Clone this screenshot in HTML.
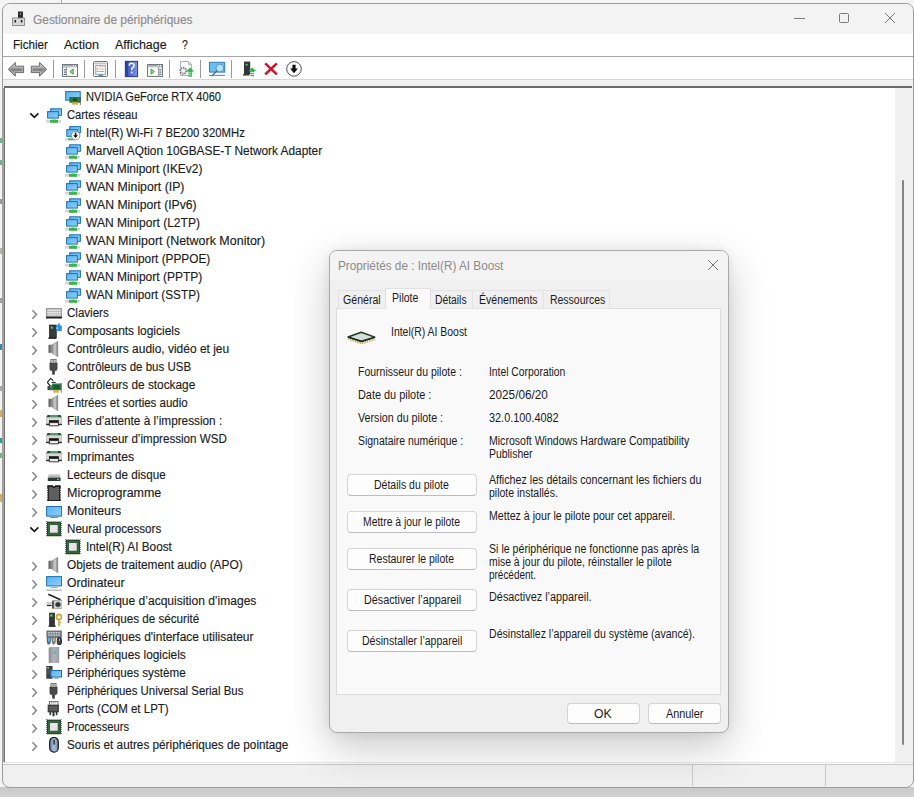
<!DOCTYPE html>
<html><head><meta charset="utf-8">
<style>
*{margin:0;padding:0;box-sizing:border-box}
html,body{width:914px;height:797px;overflow:hidden;background:#f4f4f4;font-family:"Liberation Sans",sans-serif;position:relative}
.a{position:absolute;display:block}
.t{position:absolute;white-space:pre;line-height:18px;height:18px;transform-origin:0 0;font-family:"Liberation Sans",sans-serif}
.btn{position:absolute;background:#fdfdfd;border:1px solid #d4d4d4;border-bottom-color:#bdbdbd;border-radius:4px}
</style></head><body>
<!-- background outside window -->
<div class="a" style="left:0;top:787px;width:914px;height:10px;background:linear-gradient(#c9c9c9,#d2d2d2)"></div>
<div class="a" style="left:0;top:138px;width:2px;height:5px;background:#3a9a5a;opacity:.7"></div>
<div class="a" style="left:0;top:160px;width:2px;height:5px;background:#3a9a5a;opacity:.7"></div>
<div class="a" style="left:0;top:199px;width:2px;height:5px;background:#9a9a9a"></div>
<div class="a" style="left:0;top:248px;width:2px;height:6px;background:#b8b8a0"></div>
<div class="a" style="left:0;top:298px;width:2px;height:5px;background:#a0a0a0"></div>
<div class="a" style="left:0;top:344px;width:2px;height:6px;background:#3a8aa0"></div>
<div class="a" style="left:0;top:386px;width:2px;height:5px;background:#a8a8a8"></div>
<div class="a" style="left:0;top:410px;width:2px;height:7px;background:#d0b060"></div>
<div class="a" style="left:0;top:438px;width:2px;height:5px;background:#3a9a8a"></div>
<div class="a" style="left:0;top:453px;width:2px;height:5px;background:#3a9a5a;opacity:.7"></div>
<div class="a" style="left:0;top:494px;width:2px;height:8px;background:#d0b060"></div>
<div class="a" style="left:61px;top:0;width:1px;height:3px;background:#b0b0b0"></div>
<!-- window -->
<div class="a" style="left:2px;top:3px;width:912px;height:785px;border:1px solid #9c9c9c;border-radius:8px;background:#f0f0f0;overflow:hidden">
  <div class="a" style="left:0;top:0;width:100%;height:30px;background:#f3f3f3"></div>
  <div class="a" style="left:0;top:30px;width:100%;height:23px;background:#fff;border-bottom:1px solid #a6a6a6"></div>
  <div class="a" style="left:0;top:53px;width:100%;height:23px;background:#fff;border-bottom:1px solid #d6d6d6"></div>
  <div class="a" style="left:0;top:76px;width:100%;height:7px;background:#f0f0f0"></div>
</div>
<!-- title bar icon + caption buttons -->
<svg class="a" style="left:11px;top:10px" width="16" height="18" viewBox="0 0 16 18">
  <rect x="7" y="1.5" width="5" height="7" fill="#2e2e2e"/><rect x="9" y="3.5" width="1" height="1" fill="#ddd"/>
  <rect x="1.5" y="8" width="12" height="7.5" fill="#d8d8d8" stroke="#7a7a7a" stroke-width="0.8"/>
  <rect x="3.5" y="10" width="1.6" height="2.5" fill="#222"/><rect x="9.8" y="10" width="1.6" height="2.5" fill="#222"/>
</svg>
<div class="a" style="left:794px;top:18px;width:11px;height:1px;background:#7a7a7a"></div>
<div class="a" style="left:839px;top:13px;width:10px;height:10px;border:1px solid #7a7a7a;border-radius:1.5px"></div>
<svg class="a" style="left:884px;top:12px" width="12" height="12" viewBox="0 0 12 12"><path d="M1 1L11 11M11 1L1 11" stroke="#7a7a7a" stroke-width="1"/></svg>
<svg width="0" height="0" style="position:absolute"><defs>
<linearGradient id="gmon" x1="0" y1="0" x2="1" y2="1"><stop offset="0" stop-color="#56b4f0"/><stop offset="1" stop-color="#8fd0fa"/></linearGradient>
<linearGradient id="gspk" x1="0" y1="0" x2="1" y2="0"><stop offset="0" stop-color="#5a5a5a"/><stop offset="1" stop-color="#9a9a9a"/></linearGradient>
<linearGradient id="gspk2" x1="0" y1="0" x2="1" y2="0"><stop offset="0" stop-color="#8c8c8c"/><stop offset="0.55" stop-color="#cfcfcf"/><stop offset="1" stop-color="#747474"/></linearGradient>
<linearGradient id="gdisk" x1="0" y1="0" x2="0" y2="1"><stop offset="0" stop-color="#e4e4e4"/><stop offset="1" stop-color="#9a9a9a"/></linearGradient>
<linearGradient id="gcpu" x1="0" y1="0" x2="1" y2="1"><stop offset="0" stop-color="#d8ece0"/><stop offset="0.5" stop-color="#f0e0e8"/><stop offset="1" stop-color="#d0e8dc"/></linearGradient>
<linearGradient id="gsoft" x1="0" y1="0" x2="1" y2="0"><stop offset="0" stop-color="#8a9098"/><stop offset="0.5" stop-color="#b0b6bc"/><stop offset="1" stop-color="#9aa0a8"/></linearGradient>
<linearGradient id="gmouse" x1="0" y1="0" x2="1" y2="0"><stop offset="0" stop-color="#6a88a8"/><stop offset="0.5" stop-color="#a8c0d8"/><stop offset="1" stop-color="#6a88a8"/></linearGradient>
</defs></svg>
<svg class="a" style="left:0;top:56px" width="320" height="26" viewBox="0 56 320 26">
<defs>
<linearGradient id="garr" x1="0" y1="0" x2="0" y2="1"><stop offset="0" stop-color="#c8c8c8"/><stop offset="0.35" stop-color="#a4a4a4"/><stop offset="0.55" stop-color="#7e7e7e"/><stop offset="1" stop-color="#b8b8b8"/></linearGradient>
<linearGradient id="ghelp" x1="0" y1="0" x2="1" y2="0"><stop offset="0" stop-color="#3550b8"/><stop offset="1" stop-color="#7d95e8"/></linearGradient>
</defs>
<!-- back -->
<path d="M8.3 69.3 L15.3 62.5 L15.3 66.2 L23.6 66.2 L23.6 72.6 L15.3 72.6 L15.3 76.2 Z" fill="url(#garr)" stroke="#6a6a6a" stroke-width="1" stroke-linejoin="round"/>
<path d="M10 69.3 L14.3 65 L14.3 67.2 L22.6 67.2 L22.6 71.6 L14.3 71.6 L14.3 73.8 Z" fill="none" stroke="#dedede" stroke-width="0.6" opacity="0.8"/>
<!-- fwd -->
<path d="M46.6 69.3 L39.6 62.5 L39.6 66.2 L31.3 66.2 L31.3 72.6 L39.6 72.6 L39.6 76.2 Z" fill="url(#garr)" stroke="#6a6a6a" stroke-width="1" stroke-linejoin="round"/>
<path d="M44.9 69.3 L40.6 65 L40.6 67.2 L32.3 67.2 L32.3 71.6 L40.6 71.6 L40.6 73.8 Z" fill="none" stroke="#dedede" stroke-width="0.6" opacity="0.8"/>
<!-- window left arrow -->
<rect x="62.5" y="64.5" width="15" height="12" fill="#fdfdfd" stroke="#737980" stroke-width="1"/>
<line x1="63" y1="67" x2="77" y2="67" stroke="#9aa0a6" stroke-width="1"/>
<line x1="63.5" y1="65.7" x2="73" y2="65.7" stroke="#8a9096" stroke-width="1"/><rect x="74" y="65.2" width="1" height="1" fill="#6a7078"/><rect x="76" y="65.2" width="1" height="1" fill="#6a7078"/>
<line x1="66.5" y1="67" x2="66.5" y2="76.5" stroke="#9aa0a6" stroke-width="1"/>
<rect x="63.8" y="69.2" width="2.2" height="1.2" fill="#5a6470"/><rect x="63.8" y="71.5" width="2.2" height="1.2" fill="#5a6470"/><rect x="63.8" y="73.8" width="2.2" height="1.2" fill="#5a6470"/>
<rect x="67" y="67.5" width="10" height="8.5" fill="#fafcfa"/>
<path d="M69.8 71.6 L73.2 69 L73.2 74.2 Z" fill="#9ad890" stroke="#3a9a35" stroke-width="0.9"/>
<line x1="84.5" y1="60" x2="84.5" y2="78" stroke="#9a9a9a" stroke-width="1"/>
<!-- properties -->
<rect x="93.5" y="61.5" width="14" height="15" rx="1.2" fill="#f4f4f4" stroke="#6e7378" stroke-width="1"/>
<line x1="94.5" y1="63.3" x2="106.5" y2="63.3" stroke="#b0b4b8" stroke-width="1"/>
<rect x="95.8" y="65.3" width="9.5" height="9" fill="#fafcfe" stroke="#8a9098" stroke-width="0.8"/>
<rect x="99" y="65.3" width="2.6" height="1.4" fill="#e8a0a0"/><rect x="101.8" y="65.3" width="2.6" height="1.4" fill="#e8b0b0"/>
<rect x="96.8" y="68.6" width="1" height="1" fill="#5577aa"/><line x1="98.5" y1="69.1" x2="104" y2="69.1" stroke="#e0c060" stroke-width="0.9"/>
<rect x="96.8" y="71" width="1" height="1" fill="#5577aa"/><line x1="98.5" y1="71.5" x2="104" y2="71.5" stroke="#a89ac8" stroke-width="0.9"/>
<rect x="98.5" y="74.5" width="4.5" height="1.6" fill="#3aa0d8"/>
<line x1="115.5" y1="60" x2="115.5" y2="78" stroke="#9a9a9a" stroke-width="1"/>
<!-- help -->
<rect x="125.3" y="61.3" width="12.3" height="15.4" fill="url(#ghelp)" stroke="#1c2e7a" stroke-width="0.9"/>
<rect x="125.8" y="61.8" width="2" height="14.4" fill="#2a42a0"/>
<path d="M129.2 65.6 Q129.4 63.2 131.6 63.2 Q134 63.2 134 65.4 Q134 66.8 132.6 67.6 Q131.6 68.3 131.6 70" fill="none" stroke="#fff" stroke-width="1.5"/>
<rect x="130.8" y="71.6" width="1.7" height="1.7" fill="#fff"/>
<!-- window right arrow -->
<rect x="147.5" y="64.5" width="15" height="12" fill="#fdfdfd" stroke="#737980" stroke-width="1"/>
<line x1="148" y1="67" x2="162" y2="67" stroke="#9aa0a6" stroke-width="1"/>
<line x1="148.5" y1="65.7" x2="158" y2="65.7" stroke="#8a9096" stroke-width="1"/><rect x="159" y="65.2" width="1" height="1" fill="#6a7078"/><rect x="161" y="65.2" width="1" height="1" fill="#6a7078"/>
<line x1="158.5" y1="67" x2="158.5" y2="76.5" stroke="#9aa0a6" stroke-width="1"/>
<rect x="159.2" y="69.2" width="2.2" height="1.2" fill="#5a6470"/><rect x="159.2" y="71.5" width="2.2" height="1.2" fill="#5a6470"/><rect x="159.2" y="73.8" width="2.2" height="1.2" fill="#5a6470"/>
<rect x="148" y="67.5" width="10" height="8.5" fill="#fafcfa"/>
<path d="M154.4 71.6 L151 69 L151 74.2 Z" fill="#9ad890" stroke="#3a9a35" stroke-width="0.9"/>
<line x1="169.5" y1="60" x2="169.5" y2="78" stroke="#9a9a9a" stroke-width="1"/>
<!-- update driver: doc + gear + green arrow -->
<path d="M180.5 61.5 L188.5 61.5 L191.5 64.5 L191.5 75.5 L180.5 75.5 Z" fill="#fbfbfb" stroke="#a8a8a8" stroke-width="0.9"/>
<path d="M188.5 61.5 L188.5 64.5 L191.5 64.5" fill="none" stroke="#a8a8a8" stroke-width="0.8"/>
<circle cx="183.3" cy="70.8" r="3.2" fill="#dadada" stroke="#777" stroke-width="1.6" stroke-dasharray="1.4 1"/>
<circle cx="183.3" cy="70.8" r="1.3" fill="#fff"/>
<path d="M190.2 67.6 L194.2 71.4 L192.2 71.4 L192.2 72.4 L188.2 72.4 L188.2 71.4 L186.2 71.4 Z" fill="#2eb84a"/>
<rect x="188.2" y="73.2" width="4" height="1.3" fill="#2eb84a"/><rect x="188.2" y="75.3" width="4" height="1.3" fill="#2eb84a"/>
<line x1="200.5" y1="60" x2="200.5" y2="78" stroke="#9a9a9a" stroke-width="1"/>
<!-- scan: monitor + magnifier -->
<rect x="209.5" y="62.3" width="15.2" height="9.8" fill="#6cc0f0" stroke="#2d7fb8" stroke-width="1"/>
<circle cx="219.8" cy="68" r="3.9" fill="#b6e0f8" stroke="#3f8fc8" stroke-width="0.9"/>
<line x1="216.9" y1="70.9" x2="211.6" y2="76.2" stroke="#55606a" stroke-width="1.3"/>
<line x1="209" y1="75.4" x2="225" y2="75.4" stroke="#6a8aa6" stroke-width="1.1"/>
<line x1="231.5" y1="60" x2="231.5" y2="78" stroke="#9a9a9a" stroke-width="1"/>
<!-- enable device: dark tower + green arrow -->
<rect x="244" y="61.6" width="6.2" height="13" fill="#34343a"/>
<rect x="245.7" y="63.8" width="1.9" height="1.9" fill="#3adc5a"/>
<rect x="243" y="74.3" width="6" height="1.2" fill="#222"/>
<path d="M252.2 67.4 L256 71 L254 71 L254 72 L250.4 72 L250.4 71 L248.4 71 Z" fill="#2eb84a"/>
<rect x="250.4" y="72.8" width="3.6" height="1.3" fill="#2eb84a"/><rect x="250.4" y="74.9" width="3.6" height="1.3" fill="#2eb84a"/>
<!-- red X -->
<path d="M265.2 63.4 L276.8 74.4 M276.8 63.4 L265.2 74.4" stroke="#d3132b" stroke-width="2.6"/>
<!-- circle down arrow -->
<circle cx="294" cy="68.9" r="7.3" fill="#fff" stroke="#3c3c3c" stroke-width="0.9"/>
<path d="M292.4 64.8 L295.6 64.8 L295.6 68.4 L297.9 68.4 L294 73.2 L290.1 68.4 L292.4 68.4 Z" fill="#111"/>
</svg>
<div class="a" style="left:53px;top:60px;width:1px;height:18px;background:#9a9a9a"></div>
<!-- tree view -->
<div class="a" style="left:4px;top:86px;width:908px;height:2px;background:#6a6a6a"></div>
<div class="a" style="left:3px;top:88px;width:1px;height:674px;background:#a8a8a8"></div>
<div class="a" style="left:4px;top:88px;width:1px;height:674px;background:#707070"></div>
<div class="a" style="left:5px;top:88px;width:890px;height:674px;background:#fff"></div>
<div class="a" style="left:895px;top:88px;width:17px;height:674px;background:#f0f0f0"></div>
<div class="a" style="left:902px;top:180px;width:2px;height:565px;background:#858585;border-radius:1px"></div>
<div class="a" style="left:3px;top:762px;width:910px;height:1px;background:#e6e6e6"></div>
<div class="a" style="left:3px;top:763px;width:910px;height:1px;background:#fafafa"></div>
<div class="a" style="left:3px;top:764px;width:910px;height:1px;background:#c8c8c8"></div>
<div class="a" style="left:692px;top:765px;width:1px;height:21px;background:#c8c8c8"></div>
<div class="a" style="left:825px;top:765px;width:1px;height:21px;background:#c8c8c8"></div>
<svg class="a" style="left:65px;top:89px" width="16" height="16" viewBox="0 0 16 16">
<rect x="0.7" y="2.6" width="14.5" height="8.6" fill="url(#gmon)" stroke="#1f6fb0" stroke-width="1"/>
<rect x="4.8" y="8.3" width="10.6" height="5" fill="#2c7a3c" stroke="#1d5a2a" stroke-width="0.6"/>
<rect x="8" y="9.5" width="4" height="2.5" fill="#1a4a22"/>
<rect x="7" y="13.3" width="6" height="2.3" fill="#d8b040"/>
<line x1="15.3" y1="8" x2="15.3" y2="16" stroke="#5a5a5a" stroke-width="0.8"/>
</svg>
<svg class="a" style="left:46px;top:107px" width="16" height="16" viewBox="0 0 16 16">
<rect x="4.7" y="1.8" width="10.7" height="6.5" fill="url(#gmon)" stroke="#1f6fb0" stroke-width="1"/>
<rect x="1.6" y="4.6" width="10.7" height="6.5" fill="url(#gmon)" stroke="#1f6fb0" stroke-width="1"/>
<rect x="0" y="13" width="15" height="2.6" fill="#d6d6d6"/>
<rect x="4" y="12.8" width="8" height="3" fill="#3cb44a"/>
<rect x="6.5" y="11.5" width="3" height="1.5" fill="#8fd68f"/>
</svg>
<svg class="a" style="left:29px;top:110px" width="10" height="10" viewBox="0 0 10 10"><path d="M1.3 3.4 L5.4 7.3 L9.4 3.4" fill="none" stroke="#1a1a1a" stroke-width="1.7"/></svg>
<svg class="a" style="left:65px;top:125px" width="16" height="16" viewBox="0 0 16 16">
<rect x="4.7" y="1.6" width="10.7" height="6" fill="url(#gmon)" stroke="#1f6fb0" stroke-width="1"/>
<rect x="1.8" y="4.6" width="11" height="6.7" fill="url(#gmon)" stroke="#1f6fb0" stroke-width="1"/>
<rect x="0" y="13.3" width="10" height="2" fill="#d0d0d0"/>
<rect x="3" y="13.3" width="5" height="2" fill="#5cbc60"/>
<circle cx="10.6" cy="10.6" r="4.3" fill="#fff" stroke="#8c8c8c" stroke-width="1"/>
<path d="M10.6 7.6 V11" stroke="#111" stroke-width="1.6"/><path d="M8.2 10.3 H13 L10.6 13.1 Z" fill="#111"/>
</svg>
<svg class="a" style="left:65px;top:143px" width="16" height="16" viewBox="0 0 16 16">
<rect x="4.7" y="1.8" width="10.7" height="6.5" fill="url(#gmon)" stroke="#1f6fb0" stroke-width="1"/>
<rect x="1.6" y="4.6" width="10.7" height="6.5" fill="url(#gmon)" stroke="#1f6fb0" stroke-width="1"/>
<rect x="0" y="13" width="15" height="2.6" fill="#d6d6d6"/>
<rect x="4" y="12.8" width="8" height="3" fill="#3cb44a"/>
<rect x="6.5" y="11.5" width="3" height="1.5" fill="#8fd68f"/>
</svg>
<svg class="a" style="left:65px;top:161px" width="16" height="16" viewBox="0 0 16 16">
<rect x="4.7" y="1.8" width="10.7" height="6.5" fill="url(#gmon)" stroke="#1f6fb0" stroke-width="1"/>
<rect x="1.6" y="4.6" width="10.7" height="6.5" fill="url(#gmon)" stroke="#1f6fb0" stroke-width="1"/>
<rect x="0" y="13" width="15" height="2.6" fill="#d6d6d6"/>
<rect x="4" y="12.8" width="8" height="3" fill="#3cb44a"/>
<rect x="6.5" y="11.5" width="3" height="1.5" fill="#8fd68f"/>
</svg>
<svg class="a" style="left:65px;top:179px" width="16" height="16" viewBox="0 0 16 16">
<rect x="4.7" y="1.8" width="10.7" height="6.5" fill="url(#gmon)" stroke="#1f6fb0" stroke-width="1"/>
<rect x="1.6" y="4.6" width="10.7" height="6.5" fill="url(#gmon)" stroke="#1f6fb0" stroke-width="1"/>
<rect x="0" y="13" width="15" height="2.6" fill="#d6d6d6"/>
<rect x="4" y="12.8" width="8" height="3" fill="#3cb44a"/>
<rect x="6.5" y="11.5" width="3" height="1.5" fill="#8fd68f"/>
</svg>
<svg class="a" style="left:65px;top:197px" width="16" height="16" viewBox="0 0 16 16">
<rect x="4.7" y="1.8" width="10.7" height="6.5" fill="url(#gmon)" stroke="#1f6fb0" stroke-width="1"/>
<rect x="1.6" y="4.6" width="10.7" height="6.5" fill="url(#gmon)" stroke="#1f6fb0" stroke-width="1"/>
<rect x="0" y="13" width="15" height="2.6" fill="#d6d6d6"/>
<rect x="4" y="12.8" width="8" height="3" fill="#3cb44a"/>
<rect x="6.5" y="11.5" width="3" height="1.5" fill="#8fd68f"/>
</svg>
<svg class="a" style="left:65px;top:215px" width="16" height="16" viewBox="0 0 16 16">
<rect x="4.7" y="1.8" width="10.7" height="6.5" fill="url(#gmon)" stroke="#1f6fb0" stroke-width="1"/>
<rect x="1.6" y="4.6" width="10.7" height="6.5" fill="url(#gmon)" stroke="#1f6fb0" stroke-width="1"/>
<rect x="0" y="13" width="15" height="2.6" fill="#d6d6d6"/>
<rect x="4" y="12.8" width="8" height="3" fill="#3cb44a"/>
<rect x="6.5" y="11.5" width="3" height="1.5" fill="#8fd68f"/>
</svg>
<svg class="a" style="left:65px;top:233px" width="16" height="16" viewBox="0 0 16 16">
<rect x="4.7" y="1.8" width="10.7" height="6.5" fill="url(#gmon)" stroke="#1f6fb0" stroke-width="1"/>
<rect x="1.6" y="4.6" width="10.7" height="6.5" fill="url(#gmon)" stroke="#1f6fb0" stroke-width="1"/>
<rect x="0" y="13" width="15" height="2.6" fill="#d6d6d6"/>
<rect x="4" y="12.8" width="8" height="3" fill="#3cb44a"/>
<rect x="6.5" y="11.5" width="3" height="1.5" fill="#8fd68f"/>
</svg>
<svg class="a" style="left:65px;top:251px" width="16" height="16" viewBox="0 0 16 16">
<rect x="4.7" y="1.8" width="10.7" height="6.5" fill="url(#gmon)" stroke="#1f6fb0" stroke-width="1"/>
<rect x="1.6" y="4.6" width="10.7" height="6.5" fill="url(#gmon)" stroke="#1f6fb0" stroke-width="1"/>
<rect x="0" y="13" width="15" height="2.6" fill="#d6d6d6"/>
<rect x="4" y="12.8" width="8" height="3" fill="#3cb44a"/>
<rect x="6.5" y="11.5" width="3" height="1.5" fill="#8fd68f"/>
</svg>
<svg class="a" style="left:65px;top:269px" width="16" height="16" viewBox="0 0 16 16">
<rect x="4.7" y="1.8" width="10.7" height="6.5" fill="url(#gmon)" stroke="#1f6fb0" stroke-width="1"/>
<rect x="1.6" y="4.6" width="10.7" height="6.5" fill="url(#gmon)" stroke="#1f6fb0" stroke-width="1"/>
<rect x="0" y="13" width="15" height="2.6" fill="#d6d6d6"/>
<rect x="4" y="12.8" width="8" height="3" fill="#3cb44a"/>
<rect x="6.5" y="11.5" width="3" height="1.5" fill="#8fd68f"/>
</svg>
<svg class="a" style="left:65px;top:287px" width="16" height="16" viewBox="0 0 16 16">
<rect x="4.7" y="1.8" width="10.7" height="6.5" fill="url(#gmon)" stroke="#1f6fb0" stroke-width="1"/>
<rect x="1.6" y="4.6" width="10.7" height="6.5" fill="url(#gmon)" stroke="#1f6fb0" stroke-width="1"/>
<rect x="0" y="13" width="15" height="2.6" fill="#d6d6d6"/>
<rect x="4" y="12.8" width="8" height="3" fill="#3cb44a"/>
<rect x="6.5" y="11.5" width="3" height="1.5" fill="#8fd68f"/>
</svg>
<svg class="a" style="left:46px;top:305px" width="16" height="16" viewBox="0 0 16 16">
<rect x="0.5" y="3.5" width="15" height="9" fill="#bdbdbd" stroke="#9a9a9a" stroke-width="1"/>
<path d="M1.8 5.4 H14.2 M1.8 7.6 H14.2 M1.8 9.8 H14.2" stroke="#f2f2f2" stroke-width="1.1" stroke-dasharray="1.5 0.7"/>
<rect x="0" y="11.6" width="16" height="1.9" fill="#1e1e1e"/>
</svg>
<svg class="a" style="left:30px;top:309px" width="10" height="11" viewBox="0 0 10 11"><path d="M2.4 1.3 L6.4 5.5 L2.4 9.7" fill="none" stroke="#858585" stroke-width="1.5"/></svg>
<svg class="a" style="left:46px;top:323px" width="16" height="16" viewBox="0 0 16 16">
<rect x="3.3" y="2" width="7" height="12.8" fill="#3a3a3a" stroke="#1a1a1a" stroke-width="0.6"/>
<rect x="4.8" y="3.6" width="2" height="2" fill="#4fd86a"/>
<rect x="2.3" y="14.6" width="8" height="1.2" fill="#111"/>
<path d="M10 2.5 H11.8 V0.6 H13.8 V2.5 H15.8 V8 H10 Z" fill="#2a8ee8"/>
<rect x="10.6" y="4.4" width="1.5" height="1.5" fill="#bde0ff"/>
</svg>
<svg class="a" style="left:30px;top:327px" width="10" height="11" viewBox="0 0 10 11"><path d="M2.4 1.3 L6.4 5.5 L2.4 9.7" fill="none" stroke="#858585" stroke-width="1.5"/></svg>
<svg class="a" style="left:46px;top:341px" width="16" height="16" viewBox="0 0 16 16">
<rect x="2.8" y="4" width="3.2" height="7.8" fill="url(#gspk)" stroke="#7a7a7a" stroke-width="0.6"/>
<path d="M5.8 4 L11.8 0.3 L11.8 15.7 L5.8 11.8 Z" fill="url(#gspk2)" stroke="#8a8a8a" stroke-width="0.6"/>
</svg>
<svg class="a" style="left:30px;top:345px" width="10" height="11" viewBox="0 0 10 11"><path d="M2.4 1.3 L6.4 5.5 L2.4 9.7" fill="none" stroke="#858585" stroke-width="1.5"/></svg>
<svg class="a" style="left:46px;top:359px" width="16" height="16" viewBox="0 0 16 16">
<rect x="5" y="0.3" width="5" height="4" fill="#fff" stroke="#555" stroke-width="0.9"/>
<rect x="6.4" y="1.3" width="2.2" height="1.5" fill="#666"/>
<path d="M3.9 4 H11.1 V10 Q11.1 11.8 9 11.8 H6 Q3.9 11.8 3.9 10 Z" fill="#4a4a4a" stroke="#333" stroke-width="0.6"/>
<rect x="6.2" y="11.6" width="2.6" height="4" fill="#3a3a3a"/>
</svg>
<svg class="a" style="left:30px;top:363px" width="10" height="11" viewBox="0 0 10 11"><path d="M2.4 1.3 L6.4 5.5 L2.4 9.7" fill="none" stroke="#858585" stroke-width="1.5"/></svg>
<svg class="a" style="left:46px;top:377px" width="16" height="16" viewBox="0 0 16 16">
<path d="M1.3 5.3 L4.7 1.4 L7.3 3.6" fill="none" stroke="#111" stroke-width="1.1"/>
<path d="M1.3 5.3 L4.5 9.2" fill="none" stroke="#111" stroke-width="1.1"/>
<line x1="5.6" y1="5.4" x2="9.6" y2="5.4" stroke="#111" stroke-width="1"/>
<rect x="1.5" y="9" width="3" height="4" fill="#444"/>
<path d="M3 13.2 L6.5 6.4 H15.3 V13.2 Z" fill="#2d7a48"/>
<rect x="7.5" y="8" width="6" height="4" fill="#1a5a32"/>
<rect x="7.2" y="13.2" width="5.7" height="2.5" fill="#d8b040"/>
<line x1="15.3" y1="6" x2="15.3" y2="15.8" stroke="#666" stroke-width="0.8"/>
</svg>
<svg class="a" style="left:30px;top:381px" width="10" height="11" viewBox="0 0 10 11"><path d="M2.4 1.3 L6.4 5.5 L2.4 9.7" fill="none" stroke="#858585" stroke-width="1.5"/></svg>
<svg class="a" style="left:46px;top:395px" width="16" height="16" viewBox="0 0 16 16">
<rect x="2.8" y="4" width="3.2" height="7.8" fill="url(#gspk)" stroke="#7a7a7a" stroke-width="0.6"/>
<path d="M5.8 4 L11.8 0.3 L11.8 15.7 L5.8 11.8 Z" fill="url(#gspk2)" stroke="#8a8a8a" stroke-width="0.6"/>
</svg>
<svg class="a" style="left:30px;top:399px" width="10" height="11" viewBox="0 0 10 11"><path d="M2.4 1.3 L6.4 5.5 L2.4 9.7" fill="none" stroke="#858585" stroke-width="1.5"/></svg>
<svg class="a" style="left:46px;top:413px" width="16" height="16" viewBox="0 0 16 16">
<path d="M1.5 2 H14.5 L15.9 4.6 H0.1 Z" fill="#2a4a3a"/>
<rect x="4" y="2.4" width="8" height="1.2" fill="#6ccf9a"/>
<rect x="0.1" y="4.5" width="15.8" height="7.2" fill="#d8d8d8" stroke="#aaa" stroke-width="0.5"/>
<rect x="0.1" y="10.8" width="15.8" height="1.4" fill="#2a2a2a"/>
<rect x="3" y="7.2" width="9.8" height="2.4" fill="#151515"/>
<path d="M3.3 9.6 H12.5 V12.8 H3.3 Z" fill="#f4f4f4" stroke="#222" stroke-width="0.9"/>
</svg>
<svg class="a" style="left:30px;top:417px" width="10" height="11" viewBox="0 0 10 11"><path d="M2.4 1.3 L6.4 5.5 L2.4 9.7" fill="none" stroke="#858585" stroke-width="1.5"/></svg>
<svg class="a" style="left:46px;top:431px" width="16" height="16" viewBox="0 0 16 16">
<path d="M1.5 2 H14.5 L15.9 4.6 H0.1 Z" fill="#2a4a3a"/>
<rect x="4" y="2.4" width="8" height="1.2" fill="#6ccf9a"/>
<rect x="0.1" y="4.5" width="15.8" height="7.2" fill="#d8d8d8" stroke="#aaa" stroke-width="0.5"/>
<rect x="0.1" y="10.8" width="15.8" height="1.4" fill="#2a2a2a"/>
<rect x="3" y="7.2" width="9.8" height="2.4" fill="#151515"/>
<path d="M3.3 9.6 H12.5 V12.8 H3.3 Z" fill="#f4f4f4" stroke="#222" stroke-width="0.9"/>
</svg>
<svg class="a" style="left:30px;top:435px" width="10" height="11" viewBox="0 0 10 11"><path d="M2.4 1.3 L6.4 5.5 L2.4 9.7" fill="none" stroke="#858585" stroke-width="1.5"/></svg>
<svg class="a" style="left:46px;top:449px" width="16" height="16" viewBox="0 0 16 16">
<path d="M1.5 2 H14.5 L15.9 4.6 H0.1 Z" fill="#2a4a3a"/>
<rect x="4" y="2.4" width="8" height="1.2" fill="#6ccf9a"/>
<rect x="0.1" y="4.5" width="15.8" height="7.2" fill="#d8d8d8" stroke="#aaa" stroke-width="0.5"/>
<rect x="0.1" y="10.8" width="15.8" height="1.4" fill="#2a2a2a"/>
<rect x="3" y="7.2" width="9.8" height="2.4" fill="#151515"/>
<path d="M3.3 9.6 H12.5 V12.8 H3.3 Z" fill="#f4f4f4" stroke="#222" stroke-width="0.9"/>
</svg>
<svg class="a" style="left:30px;top:453px" width="10" height="11" viewBox="0 0 10 11"><path d="M2.4 1.3 L6.4 5.5 L2.4 9.7" fill="none" stroke="#858585" stroke-width="1.5"/></svg>
<svg class="a" style="left:46px;top:467px" width="16" height="16" viewBox="0 0 16 16">
<path d="M2.8 6.8 H13.6 L14.6 10.9 H1.8 Z" fill="url(#gdisk)"/>
<rect x="1.8" y="10.9" width="12.8" height="3.1" fill="#2e3a36"/>
<rect x="11.2" y="11.8" width="1.6" height="1.3" fill="#7de29a"/>
</svg>
<svg class="a" style="left:30px;top:471px" width="10" height="11" viewBox="0 0 10 11"><path d="M2.4 1.3 L6.4 5.5 L2.4 9.7" fill="none" stroke="#858585" stroke-width="1.5"/></svg>
<svg class="a" style="left:46px;top:485px" width="16" height="16" viewBox="0 0 16 16">
<path d="M2 1 H6.3 Q8 3.4 9.7 1 H14 V16 H2 Z" fill="#5e5e5e" stroke="#0e0e0e" stroke-width="1.4"/>
<path d="M1.3 4 V14" stroke="#fff" stroke-width="1" stroke-dasharray="1 1.2"/>
<path d="M14.7 4 V14" stroke="#fff" stroke-width="1" stroke-dasharray="1 1.2"/>
</svg>
<svg class="a" style="left:30px;top:489px" width="10" height="11" viewBox="0 0 10 11"><path d="M2.4 1.3 L6.4 5.5 L2.4 9.7" fill="none" stroke="#858585" stroke-width="1.5"/></svg>
<svg class="a" style="left:46px;top:503px" width="16" height="16" viewBox="0 0 16 16">
<rect x="0.6" y="3.5" width="15" height="9.6" fill="url(#gmon)" stroke="#1f6fb0" stroke-width="1"/>
<rect x="7" y="13.1" width="2" height="1" fill="#7a9ab8"/>
<rect x="4" y="14" width="8" height="1" fill="#8a8a8a"/>
</svg>
<svg class="a" style="left:30px;top:507px" width="10" height="11" viewBox="0 0 10 11"><path d="M2.4 1.3 L6.4 5.5 L2.4 9.7" fill="none" stroke="#858585" stroke-width="1.5"/></svg>
<svg class="a" style="left:46px;top:521px" width="16" height="16" viewBox="0 0 16 16">
<rect x="0.6" y="0.6" width="14.6" height="14.6" fill="none" stroke="#8a7a44" stroke-width="1.2" stroke-dasharray="1 1"/>
<rect x="1.4" y="1.4" width="13" height="13" fill="#2f6e40" stroke="#17361f" stroke-width="0.9"/>
<rect x="3.7" y="3.7" width="8.4" height="8.4" fill="url(#gcpu)" stroke="#1a3a22" stroke-width="0.6"/>
</svg>
<svg class="a" style="left:29px;top:524px" width="10" height="10" viewBox="0 0 10 10"><path d="M1.3 3.4 L5.4 7.3 L9.4 3.4" fill="none" stroke="#1a1a1a" stroke-width="1.7"/></svg>
<svg class="a" style="left:65px;top:539px" width="16" height="16" viewBox="0 0 16 16">
<rect x="0.6" y="0.6" width="14.6" height="14.6" fill="none" stroke="#8a7a44" stroke-width="1.2" stroke-dasharray="1 1"/>
<rect x="1.4" y="1.4" width="13" height="13" fill="#2f6e40" stroke="#17361f" stroke-width="0.9"/>
<rect x="3.7" y="3.7" width="8.4" height="8.4" fill="url(#gcpu)" stroke="#1a3a22" stroke-width="0.6"/>
</svg>
<svg class="a" style="left:46px;top:557px" width="16" height="16" viewBox="0 0 16 16">
<rect x="2.8" y="4" width="3.2" height="7.8" fill="url(#gspk)" stroke="#7a7a7a" stroke-width="0.6"/>
<path d="M5.8 4 L11.8 0.3 L11.8 15.7 L5.8 11.8 Z" fill="url(#gspk2)" stroke="#8a8a8a" stroke-width="0.6"/>
</svg>
<svg class="a" style="left:30px;top:561px" width="10" height="11" viewBox="0 0 10 11"><path d="M2.4 1.3 L6.4 5.5 L2.4 9.7" fill="none" stroke="#858585" stroke-width="1.5"/></svg>
<svg class="a" style="left:46px;top:575px" width="16" height="16" viewBox="0 0 16 16">
<rect x="0.6" y="1.6" width="15" height="9.3" fill="url(#gmon)" stroke="#1f6fb0" stroke-width="1"/>
<rect x="4.5" y="12" width="7" height="1" fill="#9ab0c8"/>
<rect x="0.3" y="14.5" width="15.5" height="1.3" fill="#aab4c0"/>
</svg>
<svg class="a" style="left:30px;top:579px" width="10" height="11" viewBox="0 0 10 11"><path d="M2.4 1.3 L6.4 5.5 L2.4 9.7" fill="none" stroke="#858585" stroke-width="1.5"/></svg>
<svg class="a" style="left:46px;top:593px" width="16" height="16" viewBox="0 0 16 16">
<line x1="2.3" y1="1.3" x2="14.5" y2="6.7" stroke="#222" stroke-width="1.5"/>
<rect x="0.3" y="8.8" width="6" height="4" fill="#cfcfcf"/>
<line x1="1" y1="12.6" x2="5.5" y2="12.6" stroke="#111" stroke-width="1"/>
<rect x="6" y="7.6" width="2" height="8" fill="#555"/>
<rect x="8" y="7.3" width="8" height="8.3" fill="#dcdcdc" stroke="#8a8a8a" stroke-width="0.6"/>
<circle cx="12" cy="11.6" r="2.5" fill="#2a3a3a" stroke="#666" stroke-width="0.6"/>
</svg>
<svg class="a" style="left:30px;top:597px" width="10" height="11" viewBox="0 0 10 11"><path d="M2.4 1.3 L6.4 5.5 L2.4 9.7" fill="none" stroke="#858585" stroke-width="1.5"/></svg>
<svg class="a" style="left:46px;top:611px" width="16" height="16" viewBox="0 0 16 16">
<rect x="3.1" y="1.7" width="5.8" height="13" fill="#353535"/>
<rect x="4.3" y="3.4" width="2.2" height="2.2" fill="#57d877"/>
<rect x="2.6" y="14.4" width="7" height="1.4" fill="#111"/>
<circle cx="13" cy="6" r="2.5" fill="none" stroke="#d4a83a" stroke-width="1.8"/>
<rect x="12.2" y="8.3" width="1.7" height="7" fill="#d4a83a"/>
<rect x="13.8" y="11" width="1.4" height="1.2" fill="#d4a83a"/>
</svg>
<svg class="a" style="left:30px;top:615px" width="10" height="11" viewBox="0 0 10 11"><path d="M2.4 1.3 L6.4 5.5 L2.4 9.7" fill="none" stroke="#858585" stroke-width="1.5"/></svg>
<svg class="a" style="left:46px;top:629px" width="16" height="16" viewBox="0 0 16 16">
<rect x="0.9" y="2" width="14.4" height="6.5" fill="#7a828c" stroke="#5a6068" stroke-width="0.8"/>
<path d="M2.2 3.8 H14 M2.2 6 H14" stroke="#f0f0f0" stroke-width="1.1" stroke-dasharray="1.6 0.9"/>
<path d="M0.8 8.8 Q0.3 15.8 2.8 15.6 Q4.6 15.4 5 12.5 L5.6 8.8 Z" fill="#4a6a8a"/>
<rect x="2" y="9" width="2.4" height="3.6" fill="#5ab0e0"/>
<path d="M5.8 8.8 Q5.4 15.8 8 15.6 Q9.8 15.4 10.2 8.8 Z" fill="#707880"/>
<rect x="6.8" y="9" width="2.4" height="3.4" fill="#d0a870"/>
<rect x="11.3" y="8.6" width="4.2" height="7.2" rx="2" fill="#3e444c" stroke="#15181c" stroke-width="0.8"/>
<rect x="13" y="9.6" width="0.9" height="2.5" fill="#aab"/>
</svg>
<svg class="a" style="left:30px;top:633px" width="10" height="11" viewBox="0 0 10 11"><path d="M2.4 1.3 L6.4 5.5 L2.4 9.7" fill="none" stroke="#858585" stroke-width="1.5"/></svg>
<svg class="a" style="left:46px;top:647px" width="16" height="16" viewBox="0 0 16 16">
<path d="M3 1 L5 0.2 H12.8 V15.6 H3 Z" fill="url(#gsoft)" stroke="#8a8c90" stroke-width="0.6"/>
<rect x="7.3" y="4.6" width="2.5" height="2" fill="#3ac0b0"/>
</svg>
<svg class="a" style="left:30px;top:651px" width="10" height="11" viewBox="0 0 10 11"><path d="M2.4 1.3 L6.4 5.5 L2.4 9.7" fill="none" stroke="#858585" stroke-width="1.5"/></svg>
<svg class="a" style="left:46px;top:665px" width="16" height="16" viewBox="0 0 16 16">
<rect x="0.3" y="1" width="6.2" height="12.7" fill="#3a3a3a"/>
<rect x="1.2" y="2" width="2" height="1.5" fill="#5ad07a"/>
<path d="M1.2 5 H5.5 M1.2 7 H5.5 M1.2 9 H5.5" stroke="#777" stroke-width="0.7"/>
<rect x="4.9" y="5.5" width="10.6" height="6.5" fill="url(#gmon)" stroke="#1f6fb0" stroke-width="1"/>
<rect x="8" y="12.5" width="5" height="1.4" fill="#9aa"/>
</svg>
<svg class="a" style="left:30px;top:669px" width="10" height="11" viewBox="0 0 10 11"><path d="M2.4 1.3 L6.4 5.5 L2.4 9.7" fill="none" stroke="#858585" stroke-width="1.5"/></svg>
<svg class="a" style="left:46px;top:683px" width="16" height="16" viewBox="0 0 16 16">
<rect x="5" y="0.3" width="5" height="4" fill="#fff" stroke="#555" stroke-width="0.9"/>
<rect x="6.4" y="1.3" width="2.2" height="1.5" fill="#666"/>
<path d="M3.9 4 H11.1 V10 Q11.1 11.8 9 11.8 H6 Q3.9 11.8 3.9 10 Z" fill="#4a4a4a" stroke="#333" stroke-width="0.6"/>
<rect x="6.2" y="11.6" width="2.6" height="4" fill="#3a3a3a"/>
</svg>
<svg class="a" style="left:30px;top:687px" width="10" height="11" viewBox="0 0 10 11"><path d="M2.4 1.3 L6.4 5.5 L2.4 9.7" fill="none" stroke="#858585" stroke-width="1.5"/></svg>
<svg class="a" style="left:46px;top:701px" width="16" height="16" viewBox="0 0 16 16">
<rect x="3.5" y="0.3" width="8.5" height="4" fill="#f4f4f4" stroke="#555" stroke-width="0.8"/>
<path d="M5 1.8 H10.5" stroke="#777" stroke-width="1" stroke-dasharray="1 0.8"/>
<rect x="2" y="4" width="10.6" height="7" fill="#4a4a4a" stroke="#2a2a2a" stroke-width="0.6"/>
<path d="M3.5 6.4 H11 M3.5 8.6 H11" stroke="#888" stroke-width="0.6"/>
<rect x="3.5" y="11" width="1.6" height="3.2" fill="#333"/>
<rect x="6.5" y="11" width="2" height="4.3" fill="#333"/>
<rect x="9.8" y="11" width="1.6" height="3.2" fill="#333"/>
</svg>
<svg class="a" style="left:30px;top:705px" width="10" height="11" viewBox="0 0 10 11"><path d="M2.4 1.3 L6.4 5.5 L2.4 9.7" fill="none" stroke="#858585" stroke-width="1.5"/></svg>
<svg class="a" style="left:46px;top:719px" width="16" height="16" viewBox="0 0 16 16">
<rect x="0.6" y="0.6" width="14.6" height="14.6" fill="none" stroke="#8a7a44" stroke-width="1.2" stroke-dasharray="1 1"/>
<rect x="1.4" y="1.4" width="13" height="13" fill="#2f6e40" stroke="#17361f" stroke-width="0.9"/>
<rect x="3.7" y="3.7" width="8.4" height="8.4" fill="url(#gcpu)" stroke="#1a3a22" stroke-width="0.6"/>
</svg>
<svg class="a" style="left:30px;top:723px" width="10" height="11" viewBox="0 0 10 11"><path d="M2.4 1.3 L6.4 5.5 L2.4 9.7" fill="none" stroke="#858585" stroke-width="1.5"/></svg>
<svg class="a" style="left:46px;top:737px" width="16" height="16" viewBox="0 0 16 16">
<rect x="3.7" y="0.5" width="8.6" height="14.6" rx="4.2" fill="url(#gmouse)" stroke="#151515" stroke-width="1.2"/>
<rect x="7.4" y="2.6" width="1.3" height="5" fill="#222"/>
</svg>
<svg class="a" style="left:30px;top:741px" width="10" height="11" viewBox="0 0 10 11"><path d="M2.4 1.3 L6.4 5.5 L2.4 9.7" fill="none" stroke="#858585" stroke-width="1.5"/></svg>
<div class="t" style="-webkit-text-stroke:0.15px currentColor;left:33.0px;top:11px;font-size:12px;color:#8c8c8c;transform:scaleX(0.992)">Gestionnaire de périphériques</div>
<div class="t" style="-webkit-text-stroke:0.15px currentColor;left:13.2px;top:36px;font-size:12px;color:#1a1a1a;transform:scaleX(0.969)">Fichier</div>
<div class="t" style="-webkit-text-stroke:0.15px currentColor;left:63.9px;top:36px;font-size:12px;color:#1a1a1a;transform:scaleX(1.046)">Action</div>
<div class="t" style="-webkit-text-stroke:0.15px currentColor;left:114.7px;top:36px;font-size:12px;color:#1a1a1a;transform:scaleX(1.036)">Affichage</div>
<div class="t" style="-webkit-text-stroke:0.15px currentColor;left:181.8px;top:36px;font-size:12px;color:#1a1a1a;transform:scaleX(0.882)">?</div>
<div class="t" style="-webkit-text-stroke:0.15px currentColor;left:85.6px;top:88px;font-size:12px;color:#1c1c1c;transform:scaleX(0.921)">NVIDIA GeForce RTX 4060</div>
<div class="t" style="-webkit-text-stroke:0.15px currentColor;left:67.0px;top:106px;font-size:12px;color:#1c1c1c;transform:scaleX(0.935)">Cartes réseau</div>
<div class="t" style="-webkit-text-stroke:0.15px currentColor;left:85.6px;top:124px;font-size:12px;color:#1c1c1c;transform:scaleX(0.945)">Intel(R) Wi-Fi 7 BE200 320MHz</div>
<div class="t" style="-webkit-text-stroke:0.15px currentColor;left:85.6px;top:142px;font-size:12px;color:#1c1c1c;transform:scaleX(0.987)">Marvell AQtion 10GBASE-T Network Adapter</div>
<div class="t" style="-webkit-text-stroke:0.15px currentColor;left:85.6px;top:160px;font-size:12px;color:#1c1c1c;transform:scaleX(0.996)">WAN Miniport (IKEv2)</div>
<div class="t" style="-webkit-text-stroke:0.15px currentColor;left:85.6px;top:178px;font-size:12px;color:#1c1c1c;transform:scaleX(1.023)">WAN Miniport (IP)</div>
<div class="t" style="-webkit-text-stroke:0.15px currentColor;left:85.6px;top:196px;font-size:12px;color:#1c1c1c;transform:scaleX(1.016)">WAN Miniport (IPv6)</div>
<div class="t" style="-webkit-text-stroke:0.15px currentColor;left:85.6px;top:214px;font-size:12px;color:#1c1c1c;transform:scaleX(1.003)">WAN Miniport (L2TP)</div>
<div class="t" style="-webkit-text-stroke:0.15px currentColor;left:85.6px;top:232px;font-size:12px;color:#1c1c1c;transform:scaleX(1.040)">WAN Miniport (Network Monitor)</div>
<div class="t" style="-webkit-text-stroke:0.15px currentColor;left:85.6px;top:250px;font-size:12px;color:#1c1c1c;transform:scaleX(0.984)">WAN Miniport (PPPOE)</div>
<div class="t" style="-webkit-text-stroke:0.15px currentColor;left:85.6px;top:268px;font-size:12px;color:#1c1c1c;transform:scaleX(1.001)">WAN Miniport (PPTP)</div>
<div class="t" style="-webkit-text-stroke:0.15px currentColor;left:85.6px;top:286px;font-size:12px;color:#1c1c1c;transform:scaleX(0.980)">WAN Miniport (SSTP)</div>
<div class="t" style="-webkit-text-stroke:0.15px currentColor;left:67.0px;top:304px;font-size:12px;color:#1c1c1c;transform:scaleX(0.962)">Claviers</div>
<div class="t" style="-webkit-text-stroke:0.15px currentColor;left:67.0px;top:322px;font-size:12px;color:#1c1c1c;transform:scaleX(0.996)">Composants logiciels</div>
<div class="t" style="-webkit-text-stroke:0.15px currentColor;left:67.0px;top:340px;font-size:12px;color:#1c1c1c;transform:scaleX(0.996)">Contrôleurs audio, vidéo et jeu</div>
<div class="t" style="-webkit-text-stroke:0.15px currentColor;left:67.0px;top:358px;font-size:12px;color:#1c1c1c;transform:scaleX(0.959)">Contrôleurs de bus USB</div>
<div class="t" style="-webkit-text-stroke:0.15px currentColor;left:67.0px;top:376px;font-size:12px;color:#1c1c1c;transform:scaleX(0.986)">Contrôleurs de stockage</div>
<div class="t" style="-webkit-text-stroke:0.15px currentColor;left:67.0px;top:394px;font-size:12px;color:#1c1c1c;transform:scaleX(0.957)">Entrées et sorties audio</div>
<div class="t" style="-webkit-text-stroke:0.15px currentColor;left:67.0px;top:412px;font-size:12px;color:#1c1c1c;transform:scaleX(0.982)">Files d’attente à l’impression :</div>
<div class="t" style="-webkit-text-stroke:0.15px currentColor;left:67.0px;top:430px;font-size:12px;color:#1c1c1c;transform:scaleX(0.966)">Fournisseur d’impression WSD</div>
<div class="t" style="-webkit-text-stroke:0.15px currentColor;left:67.0px;top:448px;font-size:12px;color:#1c1c1c;transform:scaleX(1.016)">Imprimantes</div>
<div class="t" style="-webkit-text-stroke:0.15px currentColor;left:67.0px;top:466px;font-size:12px;color:#1c1c1c;transform:scaleX(0.973)">Lecteurs de disque</div>
<div class="t" style="-webkit-text-stroke:0.15px currentColor;left:67.0px;top:484px;font-size:12px;color:#1c1c1c;transform:scaleX(1.040)">Microprogramme</div>
<div class="t" style="-webkit-text-stroke:0.15px currentColor;left:67.0px;top:502px;font-size:12px;color:#1c1c1c;transform:scaleX(1.029)">Moniteurs</div>
<div class="t" style="-webkit-text-stroke:0.15px currentColor;left:67.0px;top:520px;font-size:12px;color:#1c1c1c;transform:scaleX(0.968)">Neural processors</div>
<div class="t" style="-webkit-text-stroke:0.15px currentColor;left:85.6px;top:538px;font-size:12px;color:#1c1c1c;transform:scaleX(0.983)">Intel(R) AI Boost</div>
<div class="t" style="-webkit-text-stroke:0.15px currentColor;left:67.0px;top:556px;font-size:12px;color:#1c1c1c;transform:scaleX(0.990)">Objets de traitement audio (APO)</div>
<div class="t" style="-webkit-text-stroke:0.15px currentColor;left:67.0px;top:574px;font-size:12px;color:#1c1c1c;transform:scaleX(1.016)">Ordinateur</div>
<div class="t" style="-webkit-text-stroke:0.15px currentColor;left:67.0px;top:592px;font-size:12px;color:#1c1c1c;transform:scaleX(1.003)">Périphérique d’acquisition d’images</div>
<div class="t" style="-webkit-text-stroke:0.15px currentColor;left:67.0px;top:610px;font-size:12px;color:#1c1c1c;transform:scaleX(0.972)">Périphériques de sécurité</div>
<div class="t" style="-webkit-text-stroke:0.15px currentColor;left:67.0px;top:628px;font-size:12px;color:#1c1c1c;transform:scaleX(0.997)">Périphériques d'interface utilisateur</div>
<div class="t" style="-webkit-text-stroke:0.15px currentColor;left:67.0px;top:646px;font-size:12px;color:#1c1c1c;transform:scaleX(0.989)">Périphériques logiciels</div>
<div class="t" style="-webkit-text-stroke:0.15px currentColor;left:67.0px;top:664px;font-size:12px;color:#1c1c1c;transform:scaleX(0.972)">Périphériques système</div>
<div class="t" style="-webkit-text-stroke:0.15px currentColor;left:67.0px;top:682px;font-size:12px;color:#1c1c1c;transform:scaleX(0.951)">Périphériques Universal Serial Bus</div>
<div class="t" style="-webkit-text-stroke:0.15px currentColor;left:67.0px;top:700px;font-size:12px;color:#1c1c1c;transform:scaleX(0.959)">Ports (COM et LPT)</div>
<div class="t" style="-webkit-text-stroke:0.15px currentColor;left:67.0px;top:718px;font-size:12px;color:#1c1c1c;transform:scaleX(0.929)">Processeurs</div>
<div class="t" style="-webkit-text-stroke:0.15px currentColor;left:67.0px;top:736px;font-size:12px;color:#1c1c1c;transform:scaleX(0.979)">Souris et autres périphériques de pointage</div>
<!-- dialog -->
<div class="a" style="left:329px;top:250px;width:400px;height:483px;border:1px solid #a9a9a9;border-radius:8px;background:#f0f0f0;box-shadow:0 14px 40px rgba(0,0,0,0.22),0 0 10px rgba(0,0,0,0.07)"></div>
<div class="a" style="left:330px;top:251px;width:398px;height:30px;background:#f3f3f3;border-radius:7px 7px 0 0"></div>
<svg class="a" style="left:707px;top:259px" width="12" height="12" viewBox="0 0 12 12"><path d="M1 1L11 11M11 1L1 11" stroke="#777" stroke-width="1"/></svg>
<!-- tabs -->
<div class="a" style="left:336px;top:308px;width:385px;height:387px;background:#f9f9f9;border:1px solid #dcdcdc"></div>
<div class="a" style="left:338px;top:290px;width:48px;height:19px;background:#f0f0f0;border:1px solid #e3e3e3"></div>
<div class="a" style="left:430px;top:290px;width:43px;height:19px;background:#f0f0f0;border:1px solid #e3e3e3"></div>
<div class="a" style="left:472px;top:290px;width:72px;height:19px;background:#f0f0f0;border:1px solid #e3e3e3"></div>
<div class="a" style="left:543px;top:290px;width:67px;height:19px;background:#f0f0f0;border:1px solid #e3e3e3"></div>
<div class="a" style="left:385px;top:288px;width:46px;height:21px;background:#f9f9f9;border:1px solid #e0e0e0;border-bottom:none"></div>
<svg class="a" style="left:346px;top:328px" width="32" height="17" viewBox="0 0 32 17">
  <path d="M2.3 9.6 L15.5 14 L28.6 9.8" fill="none" stroke="#c8a040" stroke-width="2.2" stroke-dasharray="0.9 0.9" transform="translate(0 1.4)"/>
  <path d="M2 9 L15.3 4.3 L28.8 9.1 L15.5 13.3 Z" fill="#d6e0da" stroke="#1e3a26" stroke-width="1.5" stroke-linejoin="round"/>
  <path d="M2.2 9.3 L15.5 13.6 L28.6 9.4" fill="none" stroke="#142a1a" stroke-width="1.2"/>
</svg>
<div class="btn" style="left:347px;top:474px;width:130px;height:22px"></div>
<div class="btn" style="left:347px;top:511px;width:130px;height:22px"></div>
<div class="btn" style="left:347px;top:548px;width:130px;height:22px"></div>
<div class="btn" style="left:347px;top:589px;width:130px;height:22px"></div>
<div class="btn" style="left:347px;top:630px;width:130px;height:22px"></div>
<div class="btn" style="left:567px;top:703px;width:73px;height:21px"></div>
<div class="btn" style="left:648px;top:703px;width:73px;height:21px"></div>
<div class="t" style="left:338.1px;top:257px;font-size:12px;color:#8a8a8a;transform:scaleX(0.980)">Propriétés de : Intel(R) AI Boost</div>
<div class="t" style="left:343.2px;top:291px;font-size:12px;color:#1a1a1a;transform:scaleX(0.883)">Général</div>
<div class="t" style="left:392.2px;top:289px;font-size:12px;color:#1a1a1a;transform:scaleX(0.879)">Pilote</div>
<div class="t" style="left:435.1px;top:291px;font-size:12px;color:#1a1a1a;transform:scaleX(0.861)">Détails</div>
<div class="t" style="left:478.9px;top:291px;font-size:12px;color:#1a1a1a;transform:scaleX(0.879)">Événements</div>
<div class="t" style="left:550.3px;top:291px;font-size:12px;color:#1a1a1a;transform:scaleX(0.871)">Ressources</div>
<div class="t" style="left:391.0px;top:323px;font-size:12px;color:#1a1a1a;transform:scaleX(0.870)">Intel(R) AI Boost</div>
<div class="t" style="left:357.9px;top:363px;font-size:12px;color:#1a1a1a;transform:scaleX(0.875)">Fournisseur du pilote :</div>
<div class="t" style="left:489.2px;top:363px;font-size:12px;color:#1a1a1a;transform:scaleX(0.860)">Intel Corporation</div>
<div class="t" style="left:357.9px;top:386px;font-size:12px;color:#1a1a1a;transform:scaleX(0.908)">Date du pilote :</div>
<div class="t" style="left:489.2px;top:386px;font-size:12px;color:#1a1a1a;transform:scaleX(0.979)">2025/06/20</div>
<div class="t" style="left:357.9px;top:409px;font-size:12px;color:#1a1a1a;transform:scaleX(0.892)">Version du pilote :</div>
<div class="t" style="left:489.2px;top:409px;font-size:12px;color:#1a1a1a;transform:scaleX(0.908)">32.0.100.4082</div>
<div class="t" style="left:357.9px;top:432px;font-size:12px;color:#1a1a1a;transform:scaleX(0.871)">Signataire numérique :</div>
<div class="t" style="left:489.2px;top:432px;font-size:12px;color:#1a1a1a;transform:scaleX(0.878)">Microsoft Windows Hardware Compatibility</div>
<div class="t" style="left:489.2px;top:445px;font-size:12px;color:#1a1a1a;transform:scaleX(0.869)">Publisher</div>
<div class="t" style="left:489.2px;top:471px;font-size:12px;color:#1a1a1a;transform:scaleX(0.890)">Affichez les détails concernant les fichiers du</div>
<div class="t" style="left:489.2px;top:484px;font-size:12px;color:#1a1a1a;transform:scaleX(0.875)">pilote installés.</div>
<div class="t" style="left:489.2px;top:507px;font-size:12px;color:#1a1a1a;transform:scaleX(0.886)">Mettez à jour le pilote pour cet appareil.</div>
<div class="t" style="left:489.2px;top:540px;font-size:12px;color:#1a1a1a;transform:scaleX(0.885)">Si le périphérique ne fonctionne pas après la</div>
<div class="t" style="left:489.2px;top:553px;font-size:12px;color:#1a1a1a;transform:scaleX(0.867)">mise à jour du pilote, réinstaller le pilote</div>
<div class="t" style="left:489.2px;top:566px;font-size:12px;color:#1a1a1a;transform:scaleX(0.829)">précédent.</div>
<div class="t" style="left:489.2px;top:588px;font-size:12px;color:#1a1a1a;transform:scaleX(0.905)">Désactivez l’appareil.</div>
<div class="t" style="left:489.2px;top:625px;font-size:12px;color:#1a1a1a;transform:scaleX(0.880)">Désinstallez l’appareil du système (avancé).</div>
<div class="t" style="left:374.0px;top:476px;font-size:12px;color:#1a1a1a;transform:scaleX(0.876)">Détails du pilote</div>
<div class="t" style="left:363.3px;top:513px;font-size:12px;color:#1a1a1a;transform:scaleX(0.866)">Mettre à jour le pilote</div>
<div class="t" style="left:368.9px;top:550px;font-size:12px;color:#1a1a1a;transform:scaleX(0.873)">Restaurer le pilote</div>
<div class="t" style="left:363.5px;top:591px;font-size:12px;color:#1a1a1a;transform:scaleX(0.898)">Désactiver l’appareil</div>
<div class="t" style="left:361.5px;top:632px;font-size:12px;color:#1a1a1a;transform:scaleX(0.879)">Désinstaller l’appareil</div>
<div class="t" style="left:594.3px;top:705px;font-size:12px;color:#1a1a1a;transform:scaleX(1.015)">OK</div>
<div class="t" style="left:665.5px;top:705px;font-size:12px;color:#1a1a1a;transform:scaleX(0.904)">Annuler</div>
</body></html>
